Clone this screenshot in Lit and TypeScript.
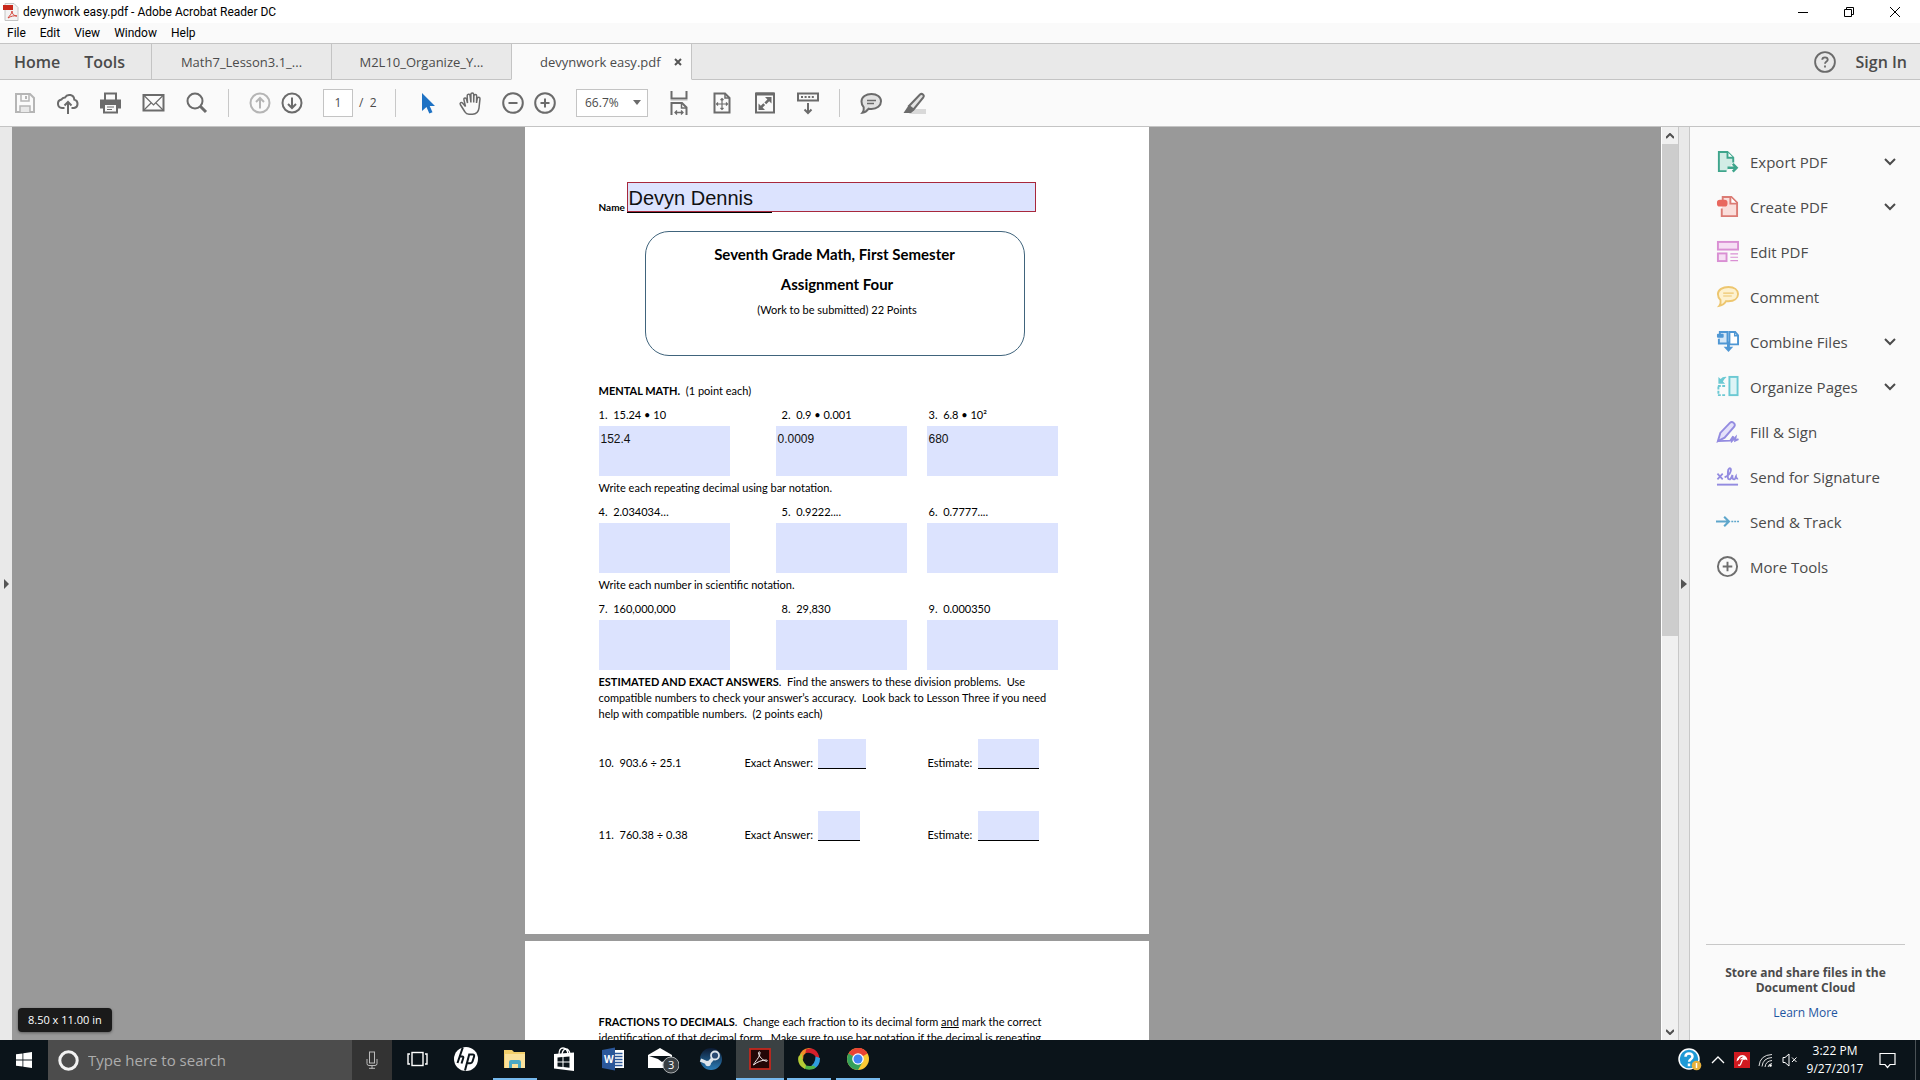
import { LitElement, html, css, svg, nothing } from "lit";
import { customElement, state } from "lit/decorators.js";

type Tool = { label: string; icon: unknown; expandable?: boolean };
type Problem = { id: number; text: string; value?: string };

const icon = (size: number, body: unknown, cls = "icon") =>
  html`<svg class=${cls} width=${size} height=${size} viewBox="0 0 24 24" fill="none" stroke="currentColor" stroke-width="2" aria-hidden="true">${body}</svg>`;

/* Toolbar glyphs, all on a 24 unit grid */
const glyphs = {
  save: svg`<path d="M3 3h14l4 4v14H3z"/><path d="M8 3v7h8V3" stroke-width="1.5"/><path d="M13 5v3" stroke-width="2"/><path d="M7 21v-6h10v6" fill="#e8e8e8" stroke-width="1.5"/>`,
  cloud: svg`<path d="M8.5 17H6a4.3 4.3 0 0 1-.6-8.5A4 4 0 0 1 9 6.400A5 5 0 0 1 18.300 8.600A4.300 4.300 0 0 1 18 17h-2.500"/><path d="M12 23V11M8.500 14.500L12 11l3.500 3.500"/>`,
  print: svg`<path d="M6 9V2.500h11V9"/><path d="M1 8.500h21v9h-3v-3H4v3H1z" fill="currentColor" stroke="none"/><path d="M5 14v7.500h13V14" fill="#fafafa"/><path d="M8 16h7M8 18.500h5" stroke-width="1.200"/>`,
  mail: svg`<rect x="1.500" y="4" width="20" height="15.500"/><path d="M2 4.500l9.500 9.500L21 4.500M2 19l7-7M21 19l-7-7" stroke-width="1.200"/>`,
  search: svg`<circle cx="10" cy="10" r="7.500"/><path d="M15.500 15.500L21 21" stroke-width="3"/>`,
  up: svg`<circle cx="12" cy="12" r="9.500"/><path d="M12 17.500V7M8 11l4-4 4 4"/>`,
  down: svg`<circle cx="12" cy="12" r="9.500"/><path d="M12 6.500V17M8 13l4 4 4-4"/>`,
  pointer: svg`<path d="M7 2v18l4.500-4 2.800 6.500 3.200-1.300-2.800-6.200h5.300z" fill="#1e72c4" stroke="none"/>`,
  hand: svg`<path d="M7.500 15.500L4.500 12c-1-1.200-3 0-2.200 1.500L7 21c.8 1.500 2 2.200 4 2.200h3.500c4 0 6-2.500 6.500-6l1-9.500c0-2-2.500-2-2.800 0L18.500 12l.2-7c0-2-2.700-2-2.800 0l-.2 6.500V3.500c0-2-2.800-2-2.800 0V11.500L12 4.500c-.2-2-2.900-1.600-2.800.2L9.500 12 8.500 8c-.5-1.800-3-1.200-2.600.6z" stroke-width="1.500"/>`,
  minus: svg`<circle cx="12" cy="12" r="9.800"/><path d="M7.500 12h9"/>`,
  plus: svg`<circle cx="12" cy="12" r="9.800"/><path d="M7.500 12h9M12 7.500v9"/>`,
  fitWidth: svg`<path d="M4.500 0v7.500h15V0"/><path d="M3.500 9.500h17" stroke="#d8d8d8" stroke-width="1"/><path d="M4.500 24V12H15l4.500 4.500V24"/><path d="M14.500 12v5h5" stroke-width="1.500"/><path d="M8 21.500h8M10 19.500l-2 2 2 2M14 19.500l2 2-2 2" stroke-width="1.300"/>`,
  fitPage: svg`<path d="M4.500 2.500H15l4.500 4.500v14.500h-15z"/><path d="M15 2.500V7h4.500" stroke-width="1.500"/><path d="M12 7.500v11M6.500 13h11M10.500 9L12 7.500 13.500 9M10.500 17l1.500 1.500 1.500-1.500M8 11.500L6.500 13 8 14.500M16 11.500l1.500 1.500-1.500 1.500" stroke-width="1.200"/>`,
  full: svg`<rect x="3" y="2.500" width="18" height="19"/><path d="M3 3h18" stroke-width="3"/><path d="M18.500 6v6.500l-2.300-2.300-3 3-1.800-1.800 3-3L12 6zM5.500 19v-6.500l2.300 2.300 2.500-2.500 1.800 1.800-2.500 2.500L12 19z" fill="currentColor" stroke="none"/>`,
  scroll: svg`<rect x="2" y="2.500" width="20" height="7"/><path d="M5 6h14" stroke-dasharray="2 1.600" /><path d="M12 12v10M8.500 18.500L12 22l3.500-3.500"/>`,
  comment: svg`<path d="M12.500 3c5.500 0 9.500 3 9.500 7.300s-4 7.700-9.500 7.700c-1 0-2-.1-2.800-.3C8 20 6 21.500 3.500 21.700 4.700 20.300 5 18.500 4.700 16.200 3.200 14.800 2.500 12.800 2.500 10.500 2.500 6 7 3 12.500 3z" fill="#e2e2e2"/><path d="M8 9.500h9M8 12.500h7" stroke-width="1.300"/>`,
  marker: svg`<path d="M10 18h14v5H7z" fill="#d9d9d9" stroke="none"/><path d="M7 15L18 3.500c2-1.700 4.800.6 3.300 2.800L11.500 18.500z" fill="#e2e2e2"/><path d="M6.500 14.500l5.500 5-3 2.500H1.500z" fill="currentColor" stroke="none"/>`,
  help: svg`<circle cx="12" cy="12" r="10.800"/><path d="M9 9.600c0-3.600 6-3.600 6 0 0 2-3 2-3 4.400M12 15.800v2.200"/>`,
};

const panelIcons = {
  exportPdf: svg`<g stroke="#3fa58c"><path d="M11 22H3V2h9l6 6v5" fill="#d2ece5"/><path d="M12 2v6h6" fill="#fff"/><path d="M12 18.500h9M17.500 14.500l4 4-4 4" stroke-width="2.600"/></g>`,
  createPdf: svg`<g stroke="#db7b74"><path d="M7 9V2h9l6 6v14H6v-8" fill="#fadedb"/><path d="M15 2v7h7" fill="#fff"/><rect x="2" y="6" width="9" height="5" rx="2" fill="#e8685f" stroke="#e8685f"/></g>`,
  editPdf: svg`<g stroke="#d98fd3"><rect x="2" y="2" width="21" height="8" fill="#f6dff4"/><rect x="2" y="14" width="9" height="8" fill="#f6dff4"/><path d="M15 14.500h8M15 18h8M15 21.500h8" stroke-width="1.300"/></g>`,
  comment: svg`<g stroke="#edc66f"><path d="M13 2c6 0 10 3 10 7.500S19 17 13 17c-.8 0-1.700 0-2.500-.2C9 19.500 6.500 21.200 3.500 21.700c1.300-1.500 1.600-3.700 1.200-6C3 14.200 2 12 2 9.500 2 5 7 2 13 2z" fill="#fdf1cf"/><path d="M7.500 8.500h11M7.500 11.500h9" stroke-width="1.200"/></g>`,
  combine: svg`<g stroke="#4f97d4"><path d="M4 6V2h8v12H3V9" fill="#d5e7f7"/><path d="M14 2h6l3 3.500V15h-9z" fill="#fff"/><path d="M19.500 2v4H23" stroke-width="1.500"/><rect x="1" y="4" width="7" height="4" rx="1" fill="#4f97d4" stroke="none"/><path d="M13 12v8" stroke-width="3"/><path d="M8 17.500h10L13 23z" fill="#4f97d4" stroke="none"/></g>`,
  organize: svg`<g stroke="#6cc9d3"><rect x="14" y="2" width="8.500" height="19" fill="#ddf4f6"/><path d="M2 11.500h9M2 21h9M2.500 12v9" stroke-dasharray="3 1.500"/><path d="M2.500 9V2l2.300 2.300Q7 1.500 11 2 8.500 4 7.200 6.700L9.500 9z" fill="#6cc9d3" stroke="none"/></g>`,
  fill: svg`<g stroke="#938be0"><path d="M2 22l2.500-8.500L14.500 3c2.500-2.300 6.500 1 4.500 4L9 18.500z" fill="#e4e1fa"/><path d="M2 22l13-.5 3-4.500-1 4.500 3.500-3.500-.5 3.500 3.500-1.500"/></g>`,
  signature: svg`<g stroke="#938be0"><path d="M1.500 9l5.500 6M7 9l-5.500 6" stroke-width="1.800"/><path d="M9 13c5-2 7-6 6.500-8.500-.6-2-3-1-3 2.500 0 4-1 8 1.500 8 2 0 2.500-3.500 3.200-4.500-.5 3 .3 4.500 1.800 4.500 1 0 1.500-2.500 1.800-3 .2 2 1 2.500 2.200 2"/><path d="M1 20.500h22"/></g>`,
  track: svg`<g stroke="#5ea6cb"><path d="M0 12h13M8.500 7l5 5-5 5" stroke-width="2.200"/><path d="M16 12h8" stroke-width="1.800" stroke-dasharray="2 1"/></g>`,
  more: svg`<g stroke="#6e6e6e"><circle cx="12" cy="12" r="10"/><path d="M7 12h10M12 7v10"/></g>`,
};

const TOOLS: Tool[] = [
  { label: "Export PDF", icon: panelIcons.exportPdf, expandable: true },
  { label: "Create PDF", icon: panelIcons.createPdf, expandable: true },
  { label: "Edit PDF", icon: panelIcons.editPdf },
  { label: "Comment", icon: panelIcons.comment },
  { label: "Combine Files", icon: panelIcons.combine, expandable: true },
  { label: "Organize Pages", icon: panelIcons.organize, expandable: true },
  { label: "Fill & Sign", icon: panelIcons.fill },
  { label: "Send for Signature", icon: panelIcons.signature },
  { label: "Send & Track", icon: panelIcons.track },
  { label: "More Tools", icon: panelIcons.more },
];

const GROUPS: { title: unknown; problems: Problem[] }[] = [
  {
    title: html`<b>MENTAL MATH.</b>  (1 point each)`,
    problems: [
      { id: 1, text: "15.24 • 10", value: "152.4" },
      { id: 2, text: "0.9 • 0.001", value: "0.0009" },
      { id: 3, text: "6.8 • 10²", value: "680" },
    ],
  },
  {
    title: "Write each repeating decimal using bar notation.",
    problems: [
      { id: 4, text: "2.034034…" },
      { id: 5, text: "0.9222...." },
      { id: 6, text: "0.7777...." },
    ],
  },
  {
    title: "Write each number in scientific notation.",
    problems: [
      { id: 7, text: "160,000,000" },
      { id: 8, text: "29,830" },
      { id: 9, text: "0.000350" },
    ],
  },
];

const DIVISIONS = [
  { id: 10, text: "903.6 ÷ 25.1", wide: true },
  { id: 11, text: "760.38 ÷ 0.38", wide: false },
];

const taskIcons = {
  view: svg`<g stroke="#fff" stroke-width="1.400"><rect x="7" y="5.500" width="11" height="13"/><path d="M5 7H3v10h2M20 7h2v10h-2"/></g>`,
  hp: svg`<circle cx="12" cy="12" r="12" fill="#fff" stroke="none"/><path d="M8.800 0.400L3.500 16M5.700 9.500h2.500q1.600 0 1 1.800L7.500 16.500M18.500 7.500h-3.300L11 23.500M18.500 7.500q2.300 0 1.500 2.300l-1.500 4.700q-.6 1.800-2.200 1.800h-2.500" stroke="#0b141a" stroke-width="2"/>`,
  explorer: svg`<g stroke="none"><path d="M1 3h8l2 2h11v16H1z" fill="#f3cf6b"/><path d="M2 7h20v14H2z" fill="#fbe29b"/><path d="M6 21v-6q0-2 2-2h8q2 0 2 2v6h-3v-4H9v4z" fill="#4ba9c6"/></g>`,
  store: svg`<g stroke="none"><path d="M2 7l20-1.500V24L2 21.500z" fill="#fff"/><path d="M5.500 10.500l5-.4v4.400h-5zM11.500 10l6-.5v5h-6zM5.500 15.500h5V20l-5-.6zM11.500 15.500h6v5.300l-6-.7z" fill="#0b141a"/></g><path d="M7 7.500Q7 1 11 1t5 6M10 7Q11 2 14 2t4 5" stroke="#fff" stroke-width="1.300"/>`,
  word: svg`<g stroke="none"><rect x="12" y="3" width="11" height="18" fill="#fff"/><path d="M14 6.500h7.500M14 9.500h7.500M14 12.500h7.500M14 15.500h7.500M14 18.500h7.500" stroke="#2b579a" stroke-width="1.300"/><path d="M1 3l13-2.500v23L1 21z" fill="#2b579a"/></g><text x="3" y="16" font-size="10" font-weight="700" font-family="Open Sans, sans-serif" fill="#fff" stroke="none">W</text>`,
  steam: svg`<defs><linearGradient id="st" x1="0" y1="0" x2="0" y2="1"><stop offset="0" stop-color="#0c1a33"/><stop offset="1" stop-color="#2b7db8"/></linearGradient></defs><circle cx="12" cy="12" r="11" fill="url(#st)" stroke="none"/><path d="M1.500 13l8 3.500 6-7" stroke="#dfe6ec" stroke-width="3.500"/><circle cx="16" cy="8.500" r="4" fill="#2a4a72" stroke="#dfe6ec" stroke-width="1.800"/><circle cx="9" cy="16.500" r="2.800" fill="#dfe6ec" stroke="none"/>`,
  acrobat: svg`<rect x="2" y="2" width="20" height="20" fill="#230606" stroke="#c3281e" stroke-width="1.800"/><path d="M5.500 18c1-3.300 6.500-7.500 6.500-12.500 0-1-1.600-1-1.500.3C10.700 9.500 15 13.700 18.500 14.300c1.300.2 1.100-1.300-.3-1.300-4 0-8.700 1.600-12.700 5z" stroke="#f4eaea" stroke-width="1"/>`,
  swirl: svg`<g stroke="none"><path d="M2.500 9A10.500 10.500 0 0 1 12 1q3 0 5 3Q10 3.500 6.500 8.500L6 13z" fill="#f28c28"/><path d="M9 2.500Q17-.5 21 6.500q1.700 3 1 7L18.500 9.500Q15 5 8.500 6z" fill="#d4202c"/><path d="M23 11q.2 8-6.500 11l-5-1.500Q18.500 17.500 18.500 9.500z" fill="#2f9de0"/><path d="M19 20.500Q12 25 6 20.500L4 15q5 5.500 12.500 3.500z" fill="#4fb548"/><path d="M8 22Q-.5 18 1.500 9.500L5.500 6Q4 12.500 9 18z" fill="#b5cc35"/></g>`,
  chrome: svg`<g stroke="none"><circle cx="12" cy="12" r="11" fill="#fcc934"/><path d="M12 12L2.500 6.500A11 11 0 0 1 21.500 6.500z" fill="#ea4335"/><path d="M12 1a11 11 0 0 1 9.500 5.500H12z" fill="#ea4335"/><path d="M2.500 6.500A11 11 0 0 0 12 23l4.800-8.300L12 12z" fill="#34a05a"/><circle cx="12" cy="12" r="5.800" fill="#fff"/><circle cx="12" cy="12" r="4.500" fill="#4285f4"/></g>`,
};

const TASKS: { name: string; icon: unknown; running?: boolean; active?: boolean }[] = [
  { name: "Task View", icon: taskIcons.view },
  { name: "HP", icon: taskIcons.hp },
  { name: "File Explorer", icon: taskIcons.explorer, running: true },
  { name: "Store", icon: taskIcons.store },
  { name: "Word", icon: taskIcons.word },
  { name: "Mail", icon: nothing },
  { name: "Steam", icon: taskIcons.steam },
  { name: "Acrobat Reader", icon: taskIcons.acrobat, active: true },
  { name: "Photos", icon: taskIcons.swirl, running: true },
  { name: "Chrome", icon: taskIcons.chrome, running: true },
];

@customElement("app-root")
export class AppRoot extends LitElement {
  @state() private zoom = "66.7%";

  static styles = css`
    :host {
      display: flex;
      flex-direction: column;
      height: 100vh;
      overflow: hidden;
      font-family: "Open Sans", "Noto Sans", sans-serif;
      font-size: 12px;
      color: #4b4b4b;
      background: #fafafa;
    }
    * { box-sizing: border-box; }
    button, input, textarea, select { font: inherit; color: inherit; border: 0; padding: 0; margin: 0; background: none; border-radius: 0; }
    svg { display: block; flex: none; }
    p, h1, h2 { margin: 0; }

    .title-bar { display: flex; align-items: center; height: 23px; padding: 0 13px 0 3px; background: #fff; color: #000; flex: none; }
    .title-bar .name { margin-left: 4px; flex: 1; font-family: Roboto, "Noto Sans", sans-serif; }
    .window-controls { display: flex; gap: 22px; }
    .window-controls button { width: 24px; height: 22px; display: grid; place-items: center; }
    .menu-bar { display: flex; align-items: center; gap: 14px; height: 20px; padding-left: 7px; color: #000; flex: none; font-family: Roboto, "Noto Sans", sans-serif; }

    .tab-bar { display: flex; height: 37px; background: #e9e9e9; border-top: 1px solid #c4c4c4; flex: none; }
    .home { display: flex; align-items: center; gap: 24px; width: 151px; padding-left: 14px; border-bottom: 1px solid #c4c4c4; font-size: 16px; font-weight: 600; }
    .tab { display: flex; align-items: center; justify-content: center; width: 180px; border-left: 1px solid #c4c4c4; border-bottom: 1px solid #c4c4c4; font-size: 13px; }
    .tab.active { background: #fafafa; border-bottom-color: #fafafa; border-right: 1px solid #c4c4c4; width: 181px; justify-content: space-between; padding: 0 9px 0 28px; }
    .account { flex: 1; display: flex; align-items: center; justify-content: flex-end; gap: 20px; padding-right: 13px; border-bottom: 1px solid #c4c4c4; font-size: 16px; }
    .account button { font-weight: 600; }
    .account svg { color: #6b6b6b; }

    .toolbar { display: flex; align-items: center; gap: 19px; height: 47px; padding: 0 13px 1px; border-bottom: 1px solid #c4c4c4; color: #6b6b6b; flex: none; }
    .toolbar button { display: block; }
    .pair { display: flex; align-items: center; gap: 8px; }
    .toolbar .dim { color: #b5b5b5; }
    .rule { width: 1px; height: 28px; background: #c8c8c8; }
    .page-no { display: flex; align-items: center; gap: 6px; width: 53px; font-size: 12px; color: #4b4b4b; white-space: pre; }
    .page-no input { width: 30px; height: 28px; border: 1px solid #c4c4c4; background: #fff; text-align: center; }
    .zoom { position: relative; display: flex; align-items: center; }
    .zoom select { appearance: none; width: 72px; height: 28px; padding-left: 8px; border: 1px solid #c4c4c4; background: #fff; color: #4b4b4b; }
    .zoom svg { position: absolute; right: 7px; pointer-events: none; }

    .main { display: flex; flex: 1; min-height: 0; }
    .rail { display: flex; align-items: center; width: 12px; padding-left: 1px; background: #e9e9e9; flex: none; }
    .rail.right { border-left: 1px solid #c8c8c8; border-right: 1px solid #c8c8c8; padding-left: 2px; }
    .canvas { position: relative; flex: 1; display: flex; flex-direction: column; align-items: center; gap: 7px; overflow: hidden; background: #999; }
    .page { width: 624px; background: #fff; color: #000; padding: 55px 74px 0; font-family: Lato, "Open Sans", sans-serif; font-size: 11px; line-height: 16px; white-space: pre; flex: none; }
    .page.first { min-height: 807px; }
    .page.second { padding-top: 73px; }
    .name-row { display: flex; align-items: flex-end; gap: 2px; }
    .name-row label { font-size: 10px; font-weight: 700; width: 26px; line-height: 12px; }
    .name-field { width: 409px; height: 31px; position: relative; }
    .name-field::after { content: ""; position: absolute; left: 0; bottom: 0; width: 145px; height: 1px; background: #000; }
    .name-field input { display: block; width: 100%; height: 30px; border: 1px solid #a8283c; background: #dce3fe; padding: 2px 0 0 1px; font-family: "Liberation Sans", Arial, sans-serif; font-size: 20px; color: #111; }
    .banner { width: 380px; height: 125px; margin: 18px 0 27px 46px; padding-top: 7px; border: 1px solid #40647c; border-radius: 24px; text-align: center; }
    .banner h1, .banner h2 { font-size: 15px; line-height: 30px; font-weight: 700; }
    .banner h2, .banner p { padding-left: 5px; }
    .banner p { line-height: 22px; }
    .group { display: grid; gap: 8px; margin-bottom: 4px; }
    .problems { display: grid; grid-template-columns: 177px 151px 132px; }
    .problem { display: grid; gap: 3px; }
    .problem:nth-child(2) label { padding-left: 6px; }
    .problem:nth-child(3) label { padding-left: 2px; }
    .problem textarea { display: block; width: 131px; height: 50px; padding: 5px 2px; resize: none; overflow: hidden; background: #dce3fe; font-family: "Liberation Sans", Arial, sans-serif; font-size: 12px; line-height: 16px; color: #111; }
    .divisions { display: grid; gap: 42px; margin-top: 17px; line-height: 12px; }
    .division { display: grid; grid-template-columns: 146px 183px auto; align-items: end; height: 30px; }
    .blank { display: grid; grid-template-columns: 73px auto; align-items: end; justify-content: start; }
    .blank.estimate { grid-template-columns: 50px auto; }
    .blank input { width: 48px; height: 30px; background: #dce3fe; border-bottom: 1px solid #000; }
    .blank.narrow input { width: 42px; }
    .blank.estimate input { width: 61px; }
    .size-tip { position: absolute; left: 6px; bottom: 8px; padding: 0 10px; border-radius: 4px; background: #1a1a1a; color: #fff; font-size: 11px; line-height: 24px; box-shadow: 0 1px 3px #0006; }

    .scrollbar { display: flex; flex-direction: column; width: 17px; background: #f0f0f0; border-left: 1px solid #fff; flex: none; }
    .scrollbar button { display: grid; place-items: center; height: 17px; color: #505050; }
    .track { flex: 1; }
    .thumb { height: 56%; background: #cdcdcd; }

    .panel { display: flex; flex-direction: column; width: 230px; padding: 12px 15px 0 16px; flex: none; }
    .panel ul { list-style: none; margin: 0; padding: 0; flex: 1; }
    .panel li button { display: flex; align-items: center; gap: 11px; width: 100%; height: 45px; padding: 0 9px 0 10px; text-align: left; font-size: 15px; color: #4b4b4b; }
    .panel li span { flex: 1; white-space: nowrap; }
    .promo { padding-top: 20px; height: 96px; border-top: 1px solid #c8c8c8; text-align: center; line-height: 15px; }
    .promo p { font-weight: 700; }
    .promo a { display: block; margin-top: 10px; color: #1f55a0; text-decoration: none; }

    .taskbar { display: flex; align-items: stretch; height: 40px; background: #0b141a; color: #fff; flex: none; }
    .start { width: 48px; display: grid; place-items: center; }
    .search { display: flex; align-items: center; gap: 9px; width: 304px; padding-left: 10px; background: #4c4c4c; }
    .search input { flex: 1; min-width: 0; font-size: 15px; }
    .search input::placeholder { color: #adadad; opacity: 1; }
    .mic { width: 40px; display: grid; place-items: center; background: #333; }
    .tasks { display: flex; gap: 1px; padding-left: 1px; flex: 1; }
    .task { width: 48px; display: grid; place-items: center; border-bottom: 2px solid transparent; }
    .task.running { border-image: linear-gradient(90deg, transparent 4px, #76b9ed 4px, #76b9ed 44px, transparent 44px) 2; }
    .task.active { background: #3b4143; border-bottom-color: #76b9ed; }
    .tray { display: flex; align-items: center; gap: 8px; padding-right: 4px; }
    .clock { width: 58px; text-align: center; line-height: 18px; white-space: nowrap; }
    .tray .notice { width: 30px; display: grid; place-items: center; }
    .edge { width: 1px; align-self: stretch; background: #4a5155; margin-left: 5px; }
  `;

  private tool(label: string, glyph: unknown, cls = "") {
    return html`<button class=${cls} aria-label=${label}>${icon(24, glyph)}</button>`;
  }

  private renderHeader() {
    return html`
      <header class="title-bar">
        <svg width="16" height="18" viewBox="0 0 16 18" aria-hidden="true">
          <path d="M2 .5h9l4 4v13H2z" fill="#f3f3f3" stroke="#c4c4c4" />
          <path d="M0 2h10v5H0z" fill="#c8291c" />
          <path d="M5 15c1-2 4-4 4-7 0 3 2 5 5 5-3-.5-6 0-9 2z" fill="none" stroke="#d4473c" />
        </svg>
        <span class="name">devynwork easy.pdf - Adobe Acrobat Reader DC</span>
        <div class="window-controls">
          <button aria-label="Minimize"><svg width="10" height="10" viewBox="0 0 10 10"><path d="M0 5.500h10" stroke="#000" /></svg></button>
          <button aria-label="Restore"><svg width="10" height="10" viewBox="0 0 10 10" fill="none" stroke="#000"><path d="M.5 2.500h7v7h-7zM2.500 2.500v-2h7v7h-2" /></svg></button>
          <button aria-label="Close"><svg width="10" height="10" viewBox="0 0 10 10"><path d="M0 0l10 10M10 0L0 10" stroke="#000" /></svg></button>
        </div>
      </header>
      <nav class="menu-bar">
        ${["File", "Edit", "View", "Window", "Help"].map((m) => html`<button>${m}</button>`)}
      </nav>
      <nav class="tab-bar">
        <div class="home"><button>Home</button><button>Tools</button></div>
        <button class="tab">Math7_Lesson3.1_...</button>
        <button class="tab">M2L10_Organize_Y...</button>
        <div class="tab active">
          <span>devynwork easy.pdf</span>
          <button aria-label="Close tab"><svg width="8" height="8" viewBox="0 0 8 8"><path d="M1 1l6 6M7 1L1 7" stroke="#555" stroke-width="2" /></svg></button>
        </div>
        <div class="account">
          <button aria-label="Help">${icon(22, glyphs.help)}</button>
          <button>Sign In</button>
        </div>
      </nav>`;
  }

  private renderToolbar() {
    return html`
      <div class="toolbar">
        ${this.tool("Save", glyphs.save, "dim")}
        ${this.tool("Upload", glyphs.cloud)}
        ${this.tool("Print", glyphs.print)}
        ${this.tool("Email", glyphs.mail)}
        ${this.tool("Find", glyphs.search)}
        <span class="rule"></span>
        <div class="pair">${this.tool("Previous page", glyphs.up, "dim")}${this.tool("Next page", glyphs.down)}</div>
        <label class="page-no"><input aria-label="Page number" .value=${"1"} /><span>/  2</span></label>
        <span class="rule"></span>
        ${this.tool("Select", glyphs.pointer)}
        ${this.tool("Pan", glyphs.hand)}
        <div class="pair">${this.tool("Zoom out", glyphs.minus)}${this.tool("Zoom in", glyphs.plus)}</div>
        <div class="zoom">
          <select aria-label="Zoom level" @change=${(e: Event) => (this.zoom = (e.target as HTMLSelectElement).value)}>
            <option selected>${this.zoom}</option>
          </select>
          <svg width="8" height="5" viewBox="0 0 8 5"><path d="M0 0h8L4 5z" fill="#6b6b6b" /></svg>
        </div>
        ${this.tool("Fit width", glyphs.fitWidth)}
        ${this.tool("Fit page", glyphs.fitPage)}
        ${this.tool("Full screen", glyphs.full)}
        ${this.tool("Scrolling", glyphs.scroll)}
        <span class="rule"></span>
        ${this.tool("Add note", glyphs.comment)}
        ${this.tool("Highlight", glyphs.marker)}
      </div>`;
  }

  private renderDocument() {
    return html`
      <div class="canvas">
        <section class="page first"><div class="name-row"><label for="name">Name</label><div class="name-field"><input id="name" .value=${"Devyn Dennis"} /></div></div><div class="banner"><h1>Seventh Grade Math, First Semester</h1><h2>Assignment Four</h2><p>(Work to be submitted) 22 Points</p></div>${GROUPS.map(
          (g) => html`<div class="group"><p>${g.title}</p><div class="problems">${g.problems.map(
            (p) => html`<div class="problem"><label for="p${p.id}">${p.id}.  ${p.text}</label><textarea id="p${p.id}" .value=${p.value ?? ""}></textarea></div>`
          )}</div></div>`
        )}<p><b>ESTIMATED AND EXACT ANSWERS</b>.  Find the answers to these division problems.  Use<br>compatible numbers to check your answer’s accuracy.  Look back to Lesson Three if you need<br>help with compatible numbers.  (2 points each)</p><div class="divisions">${DIVISIONS.map(
          (d) => html`<div class="division"><span>${d.id}.  ${d.text}</span><div class="blank ${d.wide ? "" : "narrow"}"><label for="x${d.id}">Exact Answer:</label><input id="x${d.id}" /></div><div class="blank estimate"><label for="e${d.id}">Estimate:</label><input id="e${d.id}" /></div></div>`
        )}</div></section>
        <section class="page second"><p><b>FRACTIONS TO DECIMALS</b>.  Change each fraction to its decimal form <u>and</u> mark the correct<br>identification of that decimal form.  Make sure to use bar notation if the decimal is repeating.</p></section>
        <div class="size-tip">8.50 x 11.00 in</div>
      </div>`;
  }

  private renderPanel() {
    return html`
      <aside class="panel">
        <ul>
          ${TOOLS.map(
            (t) => html`<li><button>
              ${icon(23, t.icon)}<span>${t.label}</span>
              ${t.expandable ? html`<svg width="12" height="8" viewBox="0 0 12 8" fill="none" stroke="#4b4b4b" stroke-width="2"><path d="M1 1l5 5 5-5" /></svg>` : nothing}
            </button></li>`
          )}
        </ul>
        <div class="promo">
          <p>Store and share files in the Document Cloud</p>
          <a href="#">Learn More</a>
        </div>
      </aside>`;
  }

  private renderMail() {
    return html`<svg width="34" height="30" viewBox="0 0 34 30" aria-hidden="true">
      <path d="M3 11L15 4l12 7v13H3z" fill="#fff" />
      <path d="M4 12h22l-9 6-4-3z" fill="#0b141a" />
      <circle cx="26" cy="21" r="8" fill="#3a4044" stroke="#a9adaf" />
      <text x="23" y="25" font-size="11" fill="#fff" font-family="Open Sans, sans-serif">3</text>
    </svg>`;
  }

  private renderTaskbar() {
    return html`
      <footer class="taskbar">
        <button class="start" aria-label="Start"><svg width="16" height="16" viewBox="0 0 16 16"><path d="M0 2.300l6.500-.9v6.200H0zM7.300 1.300L16 0v7.600H7.300zM0 8.400h6.500v6.200L0 13.700zM7.300 8.400H16V16l-8.700-1.300z" fill="#fff" /></svg></button>
        <label class="search">
          <svg width="21" height="21" viewBox="0 0 21 21"><circle cx="10.500" cy="10.500" r="8.700" fill="none" stroke="#f2f2f2" stroke-width="3" /></svg>
          <input aria-label="Search" placeholder="Type here to search" />
        </label>
        <button class="mic" aria-label="Voice"><svg width="12" height="18" viewBox="0 0 12 18" fill="none" stroke="#bbb"><rect x="3.500" y="1" width="5" height="11" /><path d="M1 8v4.500q0 2 2 2h6q2 0 2-2V8M6 14.500v3M3 17.300h6" /></svg></button>
        <div class="tasks">
          ${TASKS.map(
            (t) => html`<button class="task ${t.active ? "active" : ""} ${t.running ? "running" : ""}" aria-label=${t.name}>
              ${t.name === "Mail" ? this.renderMail() : icon(24, t.icon)}
            </button>`
          )}
        </div>
        <div class="tray">
          <svg width="24" height="24" viewBox="0 0 24 24"><circle cx="11" cy="11" r="10" fill="#1e9ad6" stroke="#fff" stroke-width="1.500" /><path d="M7.500 8.800c0-4.500 7-4.500 7 0 0 2.500-3.400 2.500-3.400 5M11 15.500v2.700" fill="none" stroke="#fff" stroke-width="2.500" /><circle cx="18.500" cy="17.500" r="4.800" fill="#e8b13c" /><path d="M18.500 15v5" stroke="#fff" stroke-width="1.500" /></svg>
          <svg width="16" height="14" viewBox="0 0 16 14"><path d="M2 10l6-6 6 6" fill="none" stroke="#fff" stroke-width="1.300" /></svg>
          <svg width="16" height="16" viewBox="0 0 16 16"><rect width="16" height="16" fill="#d01a20" /><path d="M2.500 9.500Q3 3.500 8.500 3q4.500.5 5 5.500-2-1.500-3.500-.5Q6.500 6 2.500 9.500z" fill="#fff" /><path d="M8.500 7.500l-2 5q-.8 1.300-2.300.3" fill="none" stroke="#fff" stroke-width="1.300" /><path d="M5 8.500Q6 5 8.500 5" fill="none" stroke="#d01a20" /></svg>
          <svg width="16" height="16" viewBox="0 0 16 16" fill="none" stroke="#ddd"><path d="M1 14Q2 3 14 2.500M4 14.500Q5 6 14 5.500M7 15q.8-6 7-6.500M10 15q.5-3 4-3.500" /><circle cx="12.500" cy="13.500" r="1" fill="#fff" /></svg>
          <svg width="16" height="14" viewBox="0 0 16 14" fill="none" stroke="#fff"><path d="M1 4.500h2l4-3.500v12L3 9.500H1zM10 4.500l4.500 4.500M14.500 4.500L10 9" /></svg>
          <time class="clock">3:22 PM<br />9/27/2017</time>
          <button class="notice" aria-label="Notifications"><svg width="17" height="17" viewBox="0 0 17 17"><path d="M1 1.500h15v11h-5l-2.500 3-2.500-3H1z" fill="none" stroke="#fff" stroke-width="1.200" /></svg></button>
          <span class="edge"></span>
        </div>
      </footer>`;
  }

  render() {
    return html`
      ${this.renderHeader()} ${this.renderToolbar()}
      <main class="main">
        <div class="rail"><svg width="9" height="10" viewBox="0 0 9 10"><path d="M3 0l5 5-5 5z" fill="#555" /></svg></div>
        ${this.renderDocument()}
        <div class="scrollbar">
          <button aria-label="Scroll up"><svg width="8" height="6" viewBox="0 0 8 6"><path d="M0 5l4-4 4 4" fill="none" stroke="currentColor" stroke-width="2" /></svg></button>
          <div class="track"><div class="thumb"></div></div>
          <button aria-label="Scroll down"><svg width="8" height="6" viewBox="0 0 8 6"><path d="M0 1l4 4 4-4" fill="none" stroke="currentColor" stroke-width="2" /></svg></button>
        </div>
        <div class="rail right"><svg width="6" height="10" viewBox="0 0 6 10"><path d="M0 0l6 5-6 5z" fill="#555" /></svg></div>
        ${this.renderPanel()}
      </main>
      ${this.renderTaskbar()}`;
  }
}
